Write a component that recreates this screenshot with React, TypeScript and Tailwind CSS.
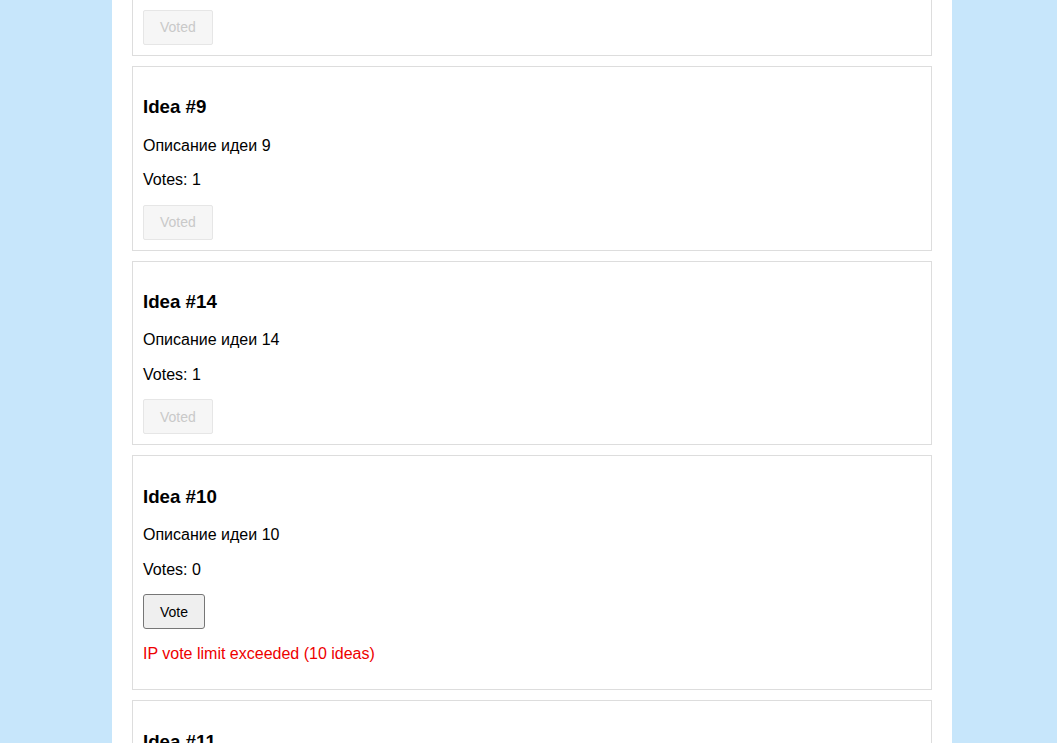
import React from "react";

type Idea = { id: number; votes: number; voted: boolean; error?: string };

const ideas: Idea[] = [
  { id: 8, votes: 1, voted: true },
  { id: 9, votes: 1, voted: true },
  { id: 14, votes: 1, voted: true },
  { id: 10, votes: 0, voted: false, error: "IP vote limit exceeded (10 ideas)" },
  { id: 11, votes: 0, voted: false },
];

function Card({ idea }: { idea: Idea }) {
  return (
    <div className="border border-[#dddddd] p-[10px] mb-[10px] bg-white">
      <h3 className="text-[18.72px] leading-[21.5px] font-bold mt-[19.72px] mb-[18.72px] text-black">Idea #{idea.id}</h3>
      <p className="text-[16px] leading-[18.4px] my-[16px] text-black">Описание идеи {idea.id}</p>
      <p className="text-[16px] leading-[18.4px] mt-[16px] mb-[15px] text-black">Votes: {idea.votes}</p>
      {idea.voted ? (
        <button
          disabled
          className="block h-[35px] px-[16px] text-[14px] leading-[16px] border border-[#e6e6e6] bg-[#f6f6f6] text-[#c9c9c9] rounded-[2px]"
        >
          Voted
        </button>
      ) : (
        <button className="block h-[35px] px-[16px] text-[14px] leading-[16px] border border-[#767676] bg-[#efefef] text-black rounded-[3px]">
          Vote
        </button>
      )}
      {idea.error && (
        <p className="text-[16px] leading-[18.4px] my-[16px] text-[#ee0000]">{idea.error}</p>
      )}
    </div>
  );
}

export default function App() {
  return (
    <div
      className="w-full h-[743px] overflow-hidden bg-[#c7e6fb]"
      style={{ fontFamily: '"Liberation Sans", Arial, sans-serif' }}
    >
      <div className="ml-[112px] w-[840px] h-full bg-white px-[20px] overflow-hidden">
        <div className="mt-[-129px]">
          {ideas.map((i) => (
            <Card key={i.id} idea={i} />
          ))}
        </div>
      </div>
    </div>
  );
}
